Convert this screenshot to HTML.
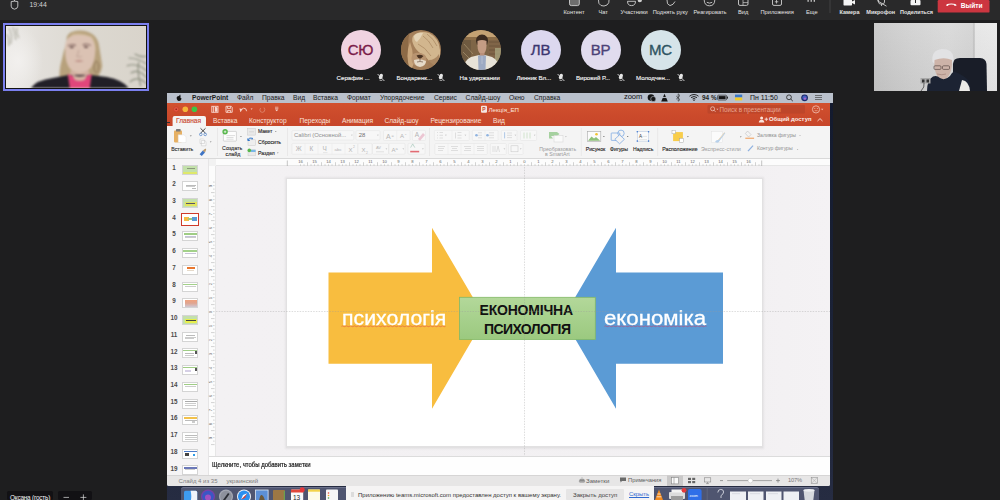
<!DOCTYPE html>
<html><head><meta charset="utf-8">
<style>
*{margin:0;padding:0;box-sizing:border-box}
html,body{width:1000px;height:500px;overflow:hidden;background:#1e1e1f;font-family:"Liberation Sans",sans-serif;position:relative}
.a{position:absolute}
.t{position:absolute;white-space:nowrap;line-height:1}
.tl{position:absolute;white-space:nowrap;line-height:1;color:#e4e4e4;font-size:5.7px;top:10.1px}
.av{position:absolute;top:29.5px;width:40px;height:40px;border-radius:50%;text-align:center;line-height:40px;font-size:15px;letter-spacing:-0.2px;-webkit-text-stroke:0.35px currentColor}
.nm{position:absolute;top:74.5px;color:#f2f2f2;font-size:6.1px;white-space:nowrap;line-height:1;-webkit-text-stroke:0.15px #f0f0f0}
.mic{position:absolute;top:74px;width:6px;height:7px}
.mb{position:absolute;white-space:nowrap;line-height:1;color:#1b1b1b;font-size:6.7px;top:94.7px}
.tab{position:absolute;white-space:nowrap;line-height:1;color:#fbe2da;font-size:6.6px;top:117.6px}
.rl{position:absolute;white-space:nowrap;line-height:1;color:#262626;font-size:5.8px;-webkit-text-stroke:0.12px #262626}
.rlg{position:absolute;white-space:nowrap;line-height:1;color:#9a9a9a;font-size:5.8px}
.btn{position:absolute;border:0.6px solid #dedddd;background:#f1f0f0;border-radius:1.5px}
.thn{position:absolute;left:182px;width:16px;height:10px;background:#fff;border:0.6px solid #d4d4d4}
.num{position:absolute;left:171px;width:8px;text-align:center;font-size:6.3px;font-weight:bold;color:#4a4a4a;line-height:1}
.rn{position:absolute;top:159.6px;font-size:4.2px;color:#666;line-height:1;width:10px;text-align:center}
</style></head><body>
<!-- ============ TEAMS TOP BAR ============ -->
<div class="a" style="left:0;top:0;width:1000px;height:20px;background:#29292a"></div>
<svg class="a" style="left:0;top:0" width="60" height="20" viewBox="0 0 60 20">
  <path d="M11.2 1.6 L11.2 6.2 Q11.2 8.6 14.5 9.2 Q17.8 8.6 17.8 6.2 L17.8 1.6 Q14.5 0.6 11.2 1.6Z" fill="none" stroke="#cfcfcf" stroke-width="0.9"/>
  <line x1="14.5" y1="0" x2="14.5" y2="1.2" stroke="#cfcfcf" stroke-width="0.9"/>
</svg>
<div class="t" style="left:29.5px;top:1.8px;font-size:6.9px;color:#d4d4d4">19:44</div>

<svg class="a" style="left:540px;top:0" width="460" height="20" viewBox="540 0 460 20">
  <g fill="none" stroke="#cfcfcf" stroke-width="0.9">
    <path d="M569.5 0 V3.8 Q569.5 5.6 571.3 5.6 H577.5 Q579.3 5.6 579.3 3.8 V0" fill="#6e6e6e"/>
    <path d="M598.5 0 Q598 4 601 5.5 Q604 6.8 607 5 Q609.5 3 609 0"/>
    <path d="M627.5 1.3 Q627.5 5.6 631.5 5.6 Q635.5 5.6 635.5 1.3 Z"/>
    <path d="M667 0 Q666.5 4.6 670 5.6 Q673.5 5 675 1.5"/>
    <path d="M704.2 0 Q704.4 5.8 709.5 5.8 Q714.6 5.8 714.8 0"/>
    <path d="M706.8 2.3 Q709.5 4 712.2 2.3"/>
    <path d="M738.5 0 V4 Q738.5 5.4 740 5.4 H746.5 Q748 5.4 748 4 V0"/>
    <path d="M772.5 0 V4 Q772.5 5.4 774 5.4 H780 Q781.5 5.4 781.5 4 V0"/>
    <path d="M878.5 -1 V2 Q878.5 4.2 881.5 4.2 Q884.5 4.2 884.5 2 V-1 M877 0.5 L886.5 6.2 M881.5 4.2 V6"/>
  </g>
  <path d="M637.6 0 Q637.6 2.2 639.8 2.2 Q642 2.2 642 0Z" fill="#cfcfcf"/>
  <path d="M743 2.6 H748 M743 0 V5.4" stroke="#cfcfcf" stroke-width="0.7"/>
  <path d="M776.5 0 V3.5 M774.8 1.8 H778.3" stroke="#cfcfcf" stroke-width="0.8"/>
  <g fill="#d0d0d0"><rect x="807.5" y="0" width="1.2" height="1.8"/><rect x="810.6" y="0" width="1.2" height="1.8"/><rect x="813.7" y="0" width="1.2" height="1.8"/></g>
  <rect x="829.6" y="0" width="0.8" height="13" fill="#4a4a4a"/>
  <path d="M843.5 0 H852 V1.6 L855 0 V4.6 L852 3 V4.8 Q852 5.4 851.4 5.4 H844.1 Q843.5 5.4 843.5 4.8Z" fill="#f4f4f4"/>
  <rect x="910.5" y="0" width="10" height="5.2" rx="1" fill="#f4f4f4"/>
  <rect x="915" y="0" width="1" height="3" fill="#29292a"/>
  <rect x="937.7" y="0" width="51.8" height="12.6" rx="1.2" fill="#cc3640"/>
  <path d="M946 5.4 Q946 3.4 951.3 3.4 Q956.6 3.4 956.6 5.4 L954.8 6 L953.8 4.8 Q951.3 4.4 948.8 4.8 L947.8 6Z" fill="#fff"/>
</svg>
<div class="tl" style="left:563.5px">Контент</div>
<div class="tl" style="left:598.5px">Чат</div>
<div class="tl" style="left:620.5px">Участники</div>
<div class="tl" style="left:652.7px">Поднять руку</div>
<div class="tl" style="left:693.5px">Реагировать</div>
<div class="tl" style="left:738px">Вид</div>
<div class="tl" style="left:760.5px">Приложения</div>
<div class="tl" style="left:806px">Еще</div>
<div class="tl" style="left:839.5px;font-size:5.5px;font-weight:bold">Камера</div>
<div class="tl" style="left:866.3px;font-size:5.5px;font-weight:bold">Микрофон</div>
<div class="tl" style="left:900px;font-size:5.5px;font-weight:bold">Поделиться</div>
<div class="t" style="left:960.8px;top:2.8px;font-size:6.6px;font-weight:bold;color:#fff">Выйти</div>

<!-- ============ SELF VIDEO ============ -->
<div class="a" style="left:2.5px;top:23px;width:146.5px;height:68px;background:#7a7fee"></div>
<div class="a" style="left:4.5px;top:25px;width:142.5px;height:64px;background:#121212"></div>
<div class="a" style="left:5.5px;top:26px;width:140.5px;height:62px;overflow:hidden;background:linear-gradient(90deg,#ebe9e6 0%,#e2dfda 25%,#dcd8d0 60%,#d9d4cb 100%)">
  <div class="a" style="left:0;top:0;width:40px;height:62px;background:radial-gradient(ellipse 25px 35px at 12px 35px,#f2f0ee,transparent)"></div>
  <svg class="a" style="left:0;top:0;filter:blur(0.8px)" width="141" height="62" viewBox="5.5 26 140.5 62">
    <path d="M8 28 Q12 34 10 44 M12 27 Q14 32 15 40 M16 28 Q15 33 18 38 M6 34 Q9 38 8 46" stroke="#8e8e7e" stroke-width="1" fill="none" opacity=".8"/>
    <path d="M128 58 Q137 58 146 64 M126 66 Q136 62 146 71 M130 73 Q138 68 146 78 M134 54 Q141 58 146 56 M129 82 Q137 75 146 84 M138 62 Q136 72 140 86" stroke="#7e8272" stroke-width="1.2" fill="none" opacity=".85"/>
    <path d="M66 42 Q64 31 79 30.5 Q95 31 98 44 Q100 56 101.5 66 Q100 74 96 78 L88 76 L70 76 Q62 80 59 79 Q58 70 61 60 Q63 50 66 42Z" fill="#b7a17c"/>
    <path d="M70 34 Q80 31 92 37 Q96 44 95 52 L92 42 Q84 36 72 38Z" fill="#cdb993" opacity=".8"/>
    <path d="M64.5 44 Q66 36 74 35 Q82 34 90 37 Q95 43 94.5 52 Q94 62 90 68 Q85 73 79 73 Q72 73 68 67 Q64 60 64.5 50Z" fill="#dbc2b3"/>
    <path d="M67 46 Q71 43.5 75 45.5 M82 45 Q86 43 90 45.5" stroke="#8a6e68" stroke-width="1.4" fill="none"/>
    <ellipse cx="71" cy="47.3" rx="2.2" ry="1" fill="#6e5450"/><ellipse cx="85.3" cy="47" rx="2.2" ry="1" fill="#6e5450"/>
    <path d="M78 50 Q77 55 76 56.5 Q78.5 57.5 81 56.5" stroke="#b89c90" stroke-width="0.8" fill="none"/>
    <path d="M73.5 61 Q78 59.5 83 61 Q78 62.5 73.5 61Z" fill="#b37f78"/>
    <ellipse cx="95.6" cy="67" rx="2.3" ry="5.8" fill="none" stroke="#8b7256" stroke-width="0.9"/>
    <path d="M70 70 Q79 76 88 70 L89 77 L69 77Z" fill="#d2b1a2"/>
    <path d="M30 88 Q36 80 52 78 L68 75 L90 75 L106 77 Q122 80 128 88Z" fill="#211f27"/>
    <path d="M67 74 Q78 80 91 74 L89 88 L69 88Z" fill="#e0467b"/>
    <path d="M71 74 Q79 79 87 74 L84 80 Q79 82 74 80Z" fill="#d4b2a2"/>
  </svg>
</div>

<!-- ============ AVATARS ============ -->
<div class="av" style="left:340.5px;background:#f0d3e1;color:#7a1c49">СЮ</div>
<div class="av" style="left:400.5px;overflow:hidden;background:#a47f5a">
  <svg class="a" style="left:0;top:0;filter:blur(0.5px)" width="40" height="40" viewBox="0 0 40 40">
    <path d="M0 0 H9 Q5 15 9 40 H0Z" fill="#8d6a46"/>
    <path d="M9 40 Q4 25 9 12 Q12 20 12 28 Q14 36 9 40Z" fill="#c9a67c"/>
    <path d="M12 6 Q18 0 28 3 Q38 8 39 20 Q40 30 34 36 Q28 32 24 26 Q16 22 13 16 Q10 10 12 6Z" fill="#d2b68e"/>
    <path d="M13 6 Q16 2 22 3 Q20 8 16 12 Q13 11 13 6Z" fill="#e4d3b6"/>
    <path d="M22 6 Q28 10 32 18 M26 4 Q33 9 36 16 M17 14 Q24 17 30 26" stroke="#a88660" stroke-width="1" fill="none" opacity=".7"/>
    <path d="M12 24 Q18 21 24 25 Q27 30 24 34 Q18 38 12 34 Q9 29 12 24Z" fill="#b89470"/>
    <path d="M13 30 Q19 28 25 31 Q25 36 19 37 Q13 36 13 30Z" fill="#e6dac8"/>
    <path d="M15.5 25.5 Q19 24 22.5 26 Q20 28.5 19 28.5 Q17 28.5 15.5 25.5Z" fill="#4a3322"/>
    <path d="M19 28.5 V31 M16 32 Q19 31 22 32" stroke="#5a4030" stroke-width="0.6" fill="none"/>
    <path d="M28 30 Q34 30 38 24 L40 40 H26Z" fill="#a07c58" opacity=".8"/>
  </svg>
</div>
<div class="av" style="left:460.5px;overflow:hidden;background:#7e6547">
  <svg class="a" style="left:0;top:0;filter:blur(0.45px)" width="40" height="40" viewBox="0 0 40 40">
    <rect x="0" y="0" width="40" height="7" fill="#c4a273"/>
    <rect x="0" y="7" width="40" height="3" fill="#8b6d48"/>
    <rect x="0" y="10" width="10" height="30" fill="#6f5a40"/>
    <path d="M3 14 L12 24 M2 22 L10 30" stroke="#a89470" stroke-width="1" opacity=".7"/>
    <rect x="27" y="10" width="13" height="30" fill="#806548"/>
    <path d="M28 12 H40 M28 16 H40 M28 20 H40 M28 24 H40" stroke="#5e4a34" stroke-width="0.8" opacity=".7"/>
    <rect x="34" y="18" width="6" height="14" fill="#a8a47e" opacity=".8"/>
    <path d="M15 11 Q15 5 21 4.5 Q27 5 27 11 L26 15 Q21 12 16 15Z" fill="#3a2a1f"/>
    <path d="M16.5 11 Q16 20 18.5 23 Q21 25 23.5 23 Q26 20 25.5 11 Q21 9 16.5 11Z" fill="#c49c84"/>
    <rect x="19" y="23" width="4.5" height="4" fill="#b98f78"/>
    <path d="M2 40 Q3 30 10 27 L18 25 Q21 28 24 25 L31 27 Q38 30 38 40Z" fill="#e8e3d8"/>
    <path d="M17 25.5 L25 25.5 L24.5 40 L17.5 40Z" fill="#9daac3"/>
    <path d="M21 26 V34" stroke="#c8ccd8" stroke-width="0.6"/>
  </svg>
</div>
<div class="av" style="left:520.5px;background:#dcd8ef;color:#3b3670">ЛВ</div>
<div class="av" style="left:580.5px;background:#e1dcee;color:#4b4277">ВР</div>
<div class="av" style="left:640.5px;background:#d6e4e9;color:#2d5462">МС</div>

<div class="nm" style="left:336.6px">Серафин ...</div>
<div class="nm" style="left:396.5px">Бондаренк...</div>
<div class="nm" style="left:459.6px">На удержании</div>
<div class="nm" style="left:516.5px">Линник Вл...</div>
<div class="nm" style="left:576px">Вировий Р...</div>
<div class="nm" style="left:636px">Молодчен...</div>
<svg class="a" style="left:330px;top:70px" width="360" height="14" viewBox="330 70 360 14">
  <defs><g id="mute"><path d="M-3.2 -3.4 L3.6 3.6" stroke="#dcdcdc" stroke-width="0.9"/><path d="M-0.8 -3.2 Q1 -4.4 2.2 -2.4 L1.6 0.6 Q0.4 2.4 -1.6 1.4 Q-2.6 0.2 -1.6 -1.2Z" fill="#e6e6e6"/><path d="M-1.4 2.6 Q0.2 3.6 1.6 2.8" stroke="#dcdcdc" stroke-width="0.7" fill="none"/></g></defs>
  <use href="#mute" x="380.8" y="77.4"/><use href="#mute" x="440.8" y="77.4"/><use href="#mute" x="560.8" y="77.4"/><use href="#mute" x="620.8" y="77.4"/><use href="#mute" x="680.8" y="77.4"/>
</svg>

<!-- ============ RIGHT VIDEO ============ -->
<div class="a" style="left:874px;top:23px;width:123px;height:68px;overflow:hidden;background:linear-gradient(90deg,#c8c8c8 0%,#d2d2d2 30%,#d9d9d9 60%,#d4d4d4 80%,#bdbdbd 81.3%,#e6e6e6 82.5%,#e9e9e9 100%)">
  <div class="a" style="left:0;top:0;width:123px;height:68px;background:linear-gradient(180deg,rgba(255,255,255,.06),rgba(0,0,0,.04))"></div>
  <svg class="a" style="left:0;top:0;filter:blur(0.45px)" width="123" height="68" viewBox="874 23 123 68">
    <path d="M953 91 V64 Q953 58 960 58 H980 Q986 58.5 986.5 64 L987 91Z" fill="#191d28"/>
    <path d="M932.5 62 Q931 50 942 49 Q953 49 953.5 58 Q954 62 952 64 L935 64Z" fill="#e2e2e4"/>
    <path d="M934.5 60 Q933.5 71 938 77 Q942 81 947 78 Q952.5 72 952 60 Q944 56.5 934.5 60Z" fill="#cdb3a8"/>
    <rect x="934" y="65.8" width="7" height="3.6" rx="1" fill="none" stroke="#5a4a46" stroke-width="0.7"/><rect x="942.5" y="65.8" width="7" height="3.6" rx="1" fill="none" stroke="#5a4a46" stroke-width="0.7"/>
    <path d="M937 74 Q942 75.5 946 74" stroke="#9a7a72" stroke-width="0.6" fill="none"/>
    <path d="M927 91 Q927 80 933 76.5 Q937 75 940 78 Q945 81 950 76 Q952 72 954 71.5 Q962 74 968 80 Q971 85 970 91Z" fill="#1c2333"/>
    <path d="M962 80 Q969 81 970 91 H959Z" fill="#ecebe8"/>
    <rect x="920.5" y="78" width="10" height="5.5" fill="#a8a8a8"/><rect x="922" y="79.5" width="2.5" height="3" fill="#333"/><rect x="926.5" y="79.5" width="2.5" height="3" fill="#333"/>
    <path d="M924 83 Q925 87 921 91" stroke="#333" stroke-width="0.7" fill="none"/>
  </svg>
</div>

<!-- ============ POWERPOINT ============ -->
<div class="a" style="left:167px;top:93px;width:666px;height:407px;background:linear-gradient(#131a2e,#1c2338 60%,#262c42)"></div>
<div class="a" style="left:167px;top:93px;width:663px;height:393px;background:#f3f2f2;border-radius:0 0 2px 2px"></div>
<!-- menubar -->
<div class="a" style="left:167px;top:93px;width:666px;height:9.5px;background:#bac1cc"></div>
<svg class="a" style="left:175px;top:94px" width="8" height="8" viewBox="0 0 8 8"><path d="M4 2.2 Q5 1 6 1.8 Q5.2 2.6 5.4 3.6 Q6.2 4.4 6.6 4.6 Q6 6.8 4.8 7 Q4.2 6.7 3.6 6.9 Q2.8 7.1 2 5.6 Q1 3.5 2.3 2.5 Q3.2 1.9 4 2.2Z M4.1 1.9 Q4.3 0.6 5.4 0.5 Q5.3 1.6 4.1 1.9Z" fill="#111"/></svg>
<div class="mb" style="left:192px;font-weight:bold;font-size:6.6px">PowerPoint</div>
<div class="mb" style="left:237px">Файл</div>
<div class="mb" style="left:262px">Правка</div>
<div class="mb" style="left:293px">Вид</div>
<div class="mb" style="left:313px">Вставка</div>
<div class="mb" style="left:347px">Формат</div>
<div class="mb" style="left:380px">Упорядочение</div>
<div class="mb" style="left:434px">Сервис</div>
<div class="mb" style="left:465.6px">Слайд-шоу</div>
<div class="mb" style="left:509px">Окно</div>
<div class="mb" style="left:534px">Справка</div>
<div class="mb" style="left:624px;font-size:7.6px;top:93.4px;letter-spacing:-0.1px;color:#111">zoom</div>
<svg class="a" style="left:640px;top:93px" width="193" height="10" viewBox="640 93 193 10">
  <circle cx="651" cy="97.6" r="3.3" fill="#151515"/><circle cx="653.3" cy="99" r="2.6" fill="#151515" stroke="#bac1cc" stroke-width="0.6"/>
  <path d="M664.5 93.8 L667.8 101.5 H661.2Z" fill="#151515"/><rect x="662" y="97" width="5" height="0.9" fill="#bac1cc"/>
  <path d="M676.2 96 L680 99.6 L678.2 101.2 V93.8 L680 95.6 L676.2 99.2" fill="none" stroke="#222" stroke-width="0.6"/>
  <path d="M689.5 96.2 Q694 92.8 698.5 96.2 M691 97.6 Q694 95.4 697 97.6 M692.6 99 Q694 98 695.4 99" fill="none" stroke="#151515" stroke-width="0.9"/><circle cx="694" cy="100.3" r="0.7" fill="#151515"/>
  <rect x="717.6" y="95.2" width="9" height="4.8" rx="0.9" fill="none" stroke="#151515" stroke-width="0.6"/><rect x="718.6" y="96.1" width="7" height="3" fill="#151515"/><rect x="727" y="96.6" width="0.9" height="2" fill="#151515"/>
  <rect x="735" y="94.6" width="7.2" height="2.9" fill="#3a78c9"/><rect x="735" y="97.5" width="7.2" height="2.9" fill="#f2cb2b"/>
  <circle cx="789" cy="97.3" r="2.4" fill="none" stroke="#222" stroke-width="0.8"/><path d="M790.7 99 L792.8 101.1" stroke="#222" stroke-width="0.9"/>
  <circle cx="804.6" cy="97.8" r="3.4" fill="#1d2a6a"/><circle cx="804.6" cy="97.8" r="2.3" fill="#4f6fd8" opacity=".8"/><circle cx="805" cy="98.6" r="1.2" fill="#d66ad0" opacity=".7"/>
  <g stroke="#333" stroke-width="0.6"><path d="M815 95.5 H822 M815 97.5 H822 M815 99.5 H822"/></g>
</svg>
<div class="mb" style="left:702px;font-size:6.4px;font-weight:bold;color:#222">94 %</div>
<div class="mb" style="left:750px;font-size:6.9px;color:#111;letter-spacing:0.05px">Пн 11:50</div>
<!-- orange title + tabs -->
<div class="a" style="left:167px;top:102.5px;width:663px;height:23.5px;background:linear-gradient(#d2512f,#cb4a2b 55%,#c7462a)"></div>
<svg class="a" style="left:167px;top:102px" width="663" height="24" viewBox="167 102 663 24">
  <circle cx="176.2" cy="109.3" r="2.6" fill="#e2563f" stroke="#c03b28" stroke-width="0.5"/><circle cx="176.2" cy="109.3" r="0.8" fill="#8a1c10"/>
  <circle cx="185.3" cy="109.3" r="2.8" fill="#f5b43a"/>
  <circle cx="194.4" cy="109.3" r="2.8" fill="#3cc646"/>
  <g fill="none" stroke="#f8d8cf" stroke-width="0.9">
    <rect x="211.8" y="106.3" width="6.2" height="6"/><path d="M213.4 106.3 V112.3"/>
    <path d="M214.8 106.9 H216.4 L217.4 108 V111.7 H214.8Z" fill="#f8d8cf" stroke="none"/>
    <path d="M226 106.3 H231.2 L232.2 107.3 V112.3 H226Z"/><path d="M227.4 106.3 V108.4 H230.6 V106.3 M227.6 112.3 V110.4 H230.6 V112.3"/>
    <path d="M240.5 111.8 Q241 108.6 243.6 108.2 Q246.4 108 246.6 111.2"/>
  </g>
  <path d="M239.4 108.4 L242.6 109 L240.4 111.6Z" fill="#f8d8cf"/>
  <path d="M250.6 108.6 H252.6 L251.6 109.8Z" fill="#f8d8cf"/>
  <path d="M260.6 108 Q259 110 260.6 111.8 Q262.4 113 264.2 111.6 Q265.6 109.6 264 107.6" fill="none" stroke="#e08a74" stroke-width="0.8"/>
  <path d="M275 107.2 H278.4 M275 108.4 H278.4" stroke="#f8d8cf" stroke-width="0.6"/><path d="M275 109.4 H278.4 L276.7 111.2Z" fill="#f8d8cf"/>
  <path d="M172.6 126 V118 Q172.6 116 174.6 116 H204 Q206 116 206 118 V126Z" fill="#f4f4f4"/>
  <rect x="481" y="105.8" width="6" height="7" rx="1" fill="#f5e6e0"/><text x="482.2" y="111.4" font-size="5" font-weight="bold" fill="#c7462a" font-family="Liberation Sans">P</text>
  <rect x="707.5" y="105" width="97.5" height="8.6" rx="1" fill="#b8442a" opacity=".75"/>
  <circle cx="712.6" cy="108.8" r="2" fill="none" stroke="#f1c3b6" stroke-width="0.8"/><path d="M714 110.2 L715.5 111.8" stroke="#f1c3b6" stroke-width="0.8"/><path d="M716.3 108.8 H718.5 L717.4 110Z" fill="#f1c3b6"/>
  <circle cx="816" cy="109.4" r="3.6" fill="none" stroke="#f2c4b6" stroke-width="0.8"/><circle cx="814.8" cy="108.6" r="0.5" fill="#f2c4b6"/><circle cx="817.3" cy="108.6" r="0.5" fill="#f2c4b6"/><path d="M814.6 110.7 H817.5" stroke="#f2c4b6" stroke-width="0.6"/>
  <path d="M821 108.8 H823.4 L822.2 110.2Z" fill="#f2c4b6"/>
  <circle cx="761.6" cy="118" r="1.5" fill="#fbe3db"/><path d="M758.8 122.6 Q759 119.8 761.6 119.8 Q764.2 119.8 764.4 122.6Z" fill="#fbe3db"/><path d="M764.6 119.2 H768 M766.3 117.5 V120.9" stroke="#fbe3db" stroke-width="0.9"/>
  <path d="M817.5 121 L820 118.6 L822.5 121" fill="none" stroke="#fbe3db" stroke-width="0.9"/>
</svg>
<div class="t" style="left:488.5px;top:106.6px;font-size:6.2px;color:#fbe6df">Лекція_ЕП</div>
<div class="t" style="left:719.5px;top:106.9px;font-size:6.3px;color:#eaa48f">Поиск в презентации</div>
<div class="t" style="left:769px;top:117.4px;font-size:5.9px;font-weight:bold;color:#fdeee9">Общий доступ</div>
<div class="tab" style="left:176px;color:#c9462b;-webkit-text-stroke:0.12px #c9462b">Главная</div>
<div class="tab" style="left:213px">Вставка</div>
<div class="tab" style="left:249px">Конструктор</div>
<div class="tab" style="left:299.4px">Переходы</div>
<div class="tab" style="left:342px">Анимация</div>
<div class="tab" style="left:384.4px">Слайд-шоу</div>
<div class="tab" style="left:430.4px">Рецензирование</div>
<div class="tab" style="left:493px">Вид</div>
<div class="a" style="left:167px;top:121.5px;width:3px;height:1px;background:#333"></div>
<!-- ribbon -->
<div class="a" style="left:167px;top:126px;width:663px;height:32.8px;background:#f4f4f4;border-bottom:0.8px solid #d9d9d9"></div>

<!-- ribbon contents -->
<svg class="a" style="left:167px;top:126px" width="663" height="32" viewBox="167 126 663 32">
  <g stroke="#dedddd" stroke-width="0.5"><path d="M217.5 128 V156 M287.5 128 V156 M429.5 128 V156 M581.3 128 V156 M657.7 128 V156"/></g>
  <!-- paste -->
  <rect x="174" y="130.6" width="8" height="11.8" rx="0.8" fill="#e6b063"/>
  <rect x="176" y="129" width="4.6" height="2.6" rx="0.6" fill="#7b7b7b"/>
  <path d="M178.2 134.8 H184 L186 136.8 V142.5 H178.2Z" fill="#fff" stroke="#d8d8d8" stroke-width="0.4"/>
  <path d="M189.8 135.5 H191.8 L190.8 136.6Z" fill="#666"/>
  <!-- scissors -->
  <path d="M200.5 128.3 L205.5 133.2 M205.5 128.3 L200.5 133.2" stroke="#222" stroke-width="0.8"/>
  <circle cx="200.8" cy="134.4" r="1.3" fill="none" stroke="#4b7fc8" stroke-width="0.7"/><circle cx="205.2" cy="134.4" r="1.3" fill="none" stroke="#4b7fc8" stroke-width="0.7"/>
  <!-- copy -->
  <path d="M200 139 H203.3 L204.5 140.2 V143.5 H200Z M201.4 140.5 H204.8 L206 141.7 V145.8 H201.4Z" fill="#fafafa" stroke="#c4c4c4" stroke-width="0.5"/>
  <path d="M209.8 141.6 H211.6 L210.7 142.6Z" fill="#777"/>
  <!-- painter -->
  <path d="M199.6 154.2 L202.8 150.6 L205 152.6 L201.8 156Z" fill="#3d73c4"/><path d="M202.8 150.6 L205.6 148.6 L206.2 149.4 L205 152.6Z" fill="#b99a6e"/>
  <!-- new slide -->
  <rect x="223.4" y="131.4" width="13" height="9.7" rx="0.6" fill="#fdfdfd" stroke="#bdbdbd" stroke-width="0.6"/>
  <path d="M226.5 135.6 H235 M226.5 137.5 H233.5 M226.5 139.2 H233.5" stroke="#bcbcbc" stroke-width="0.5"/>
  <circle cx="225.1" cy="131.8" r="2.7" fill="#56b64a"/><path d="M223.8 131.8 H226.4 M225.1 130.5 V133.1" stroke="#fff" stroke-width="0.7"/>
  <path d="M240.1 136 H241.8 L240.95 137Z" fill="#666"/>
  <!-- maket, reset, section -->
  <rect x="247.6" y="128.6" width="8" height="6.5" fill="#e9e9e9" stroke="#c9c9c9" stroke-width="0.5"/><path d="M249 131.8 H254" stroke="#bbb" stroke-width="0.4"/>
  <rect x="248" y="139.8" width="7.6" height="5.6" fill="#eee" stroke="#cacaca" stroke-width="0.5"/>
  <path d="M247.6 140 Q249.5 137 252.6 138.3 L252 139.6 M247.8 138.4 L248 140.6 L250 140.2" fill="none" stroke="#2e74c9" stroke-width="1"/>
  <rect x="248" y="149.8" width="7.6" height="6" fill="#e9e9e9" stroke="#cacaca" stroke-width="0.5"/><rect x="250.6" y="149.8" width="5" height="2.2" fill="#77b7e6"/>
  <circle cx="249.3" cy="150.4" r="1.8" fill="#56b64a"/>
  <path d="M275 131 H276.6 L275.8 132Z M277 152.5 H278.6 L277.8 153.5Z" fill="#777"/>
  <!-- font buttons -->
  <g fill="#f7f7f7" stroke="#e3e2e2" stroke-width="0.5">
    <rect x="291.9" y="130.6" width="61.9" height="9.4" rx="1"/>
    <rect x="356" y="130.6" width="24" height="9.4" rx="1"/>
    <rect x="383.5" y="130.3" width="26.6" height="10.2" rx="1"/>
    <rect x="412.4" y="130.3" width="13.1" height="10.2" rx="1"/>
    <rect x="291.9" y="143.4" width="66" height="10.9" rx="1"/>
    <rect x="358" y="143.4" width="14" height="10.9" rx="1"/>
    <rect x="372.5" y="143.4" width="16" height="10.9" rx="1"/>
    <rect x="389" y="143.4" width="16" height="10.9" rx="1"/>
    <rect x="408" y="143.4" width="17" height="10.9" rx="1"/>
    <rect x="434.4" y="130.3" width="34.9" height="10.2" rx="1"/>
    <rect x="472.3" y="130.3" width="25.8" height="10.2" rx="1"/>
    <rect x="501.4" y="130.3" width="15.7" height="10.2" rx="1"/>
    <rect x="520.5" y="130.3" width="16.1" height="10.2" rx="1"/>
    <rect x="434.8" y="143.5" width="52.5" height="11" rx="1"/>
    <rect x="490.3" y="143.5" width="16" height="11" rx="1"/>
    <rect x="508.5" y="143.5" width="14.6" height="11" rx="1"/>
  </g>
  <g stroke="#e6e5e5" stroke-width="0.4"><path d="M305 143.6 V154.2 M318 143.6 V154.2 M332 143.6 V154.2 M345 143.6 V154.2 M396.8 130.4 V140.4 M452 130.4 V140.4 M485 130.4 V140.4 M448 143.6 V154.4 M461 143.6 V154.4 M474 143.6 V154.4"/></g>
  <g fill="#b3b3b3"><path d="M351 134.8 H352.8 L351.9 135.8Z M377 134.8 H378.8 L377.9 135.8Z M445 134.8 H446.8 L445.9 135.8Z M464.5 134.8 H466.3 L465.4 135.8Z M514.5 134.8 H516.3 L515.4 135.8Z M533.8 134.8 H535.6 L534.7 135.8Z M385.5 148.4 H387.3 L386.4 149.4Z M402.4 148.4 H404.2 L403.3 149.4Z M422 148.4 H423.8 L422.9 149.4Z M503.5 148.4 H505.3 L504.4 149.4Z M519.8 148.4 H521.6 L520.7 149.4Z M565 136.2 H566.8 L565.9 137.2Z"/></g>
  <g fill="none" stroke="#c4c4c4" stroke-width="0.5">
    <path d="M437 132.5 H438 M437 135.3 H438 M437 138 H438 M439.5 132.5 H443 M439.5 135.3 H443 M439.5 138 H443"/>
    <path d="M455.5 132.5 V138.5 M457.5 132.5 H461.5 M457.5 135.3 H461.5 M457.5 138 H461.5"/>
    <path d="M478 132.8 H482 M478 135.3 H482 M478 137.8 H482 M489 132.8 H494 M489 135.3 H494 M489 137.8 H494"/>
    <path d="M507 133 H512 M507 135.3 H512 M507 137.6 H512"/>
    <path d="M524 132.5 V138.5 M527 132.5 V138.5 M530 132.5 V138.5" stroke="#a9cfa0"/>
    <path d="M438 146.5 H445 M438 148.5 H444 M438 150.5 H443 M451 146.5 H458 M452 148.5 H457 M451 150.5 H458 M464 146.5 H471 M465 148.5 H471 M464 150.5 H471 M477 146.5 H484 M477 148.5 H484 M477 150.5 H484"/>
    <path d="M493 146 V152 M495 146 V152 M498 146 L496.6 152 M498 146 L499.5 152"/>
    <rect x="511" y="145.8" width="7" height="6"/>
  </g>
  <circle cx="476.5" cy="135.3" r="1.3" fill="#8fb3e0"/><circle cx="487.5" cy="135.3" r="1.3" fill="#8fb3e0"/>
  <path d="M504.6 132.2 V138.4" stroke="#8fb3e0" stroke-width="0.7"/>
  <!-- text format glyphs -->
  <g font-family="Liberation Sans" fill="#b4b4b4">
    <text x="295.8" y="151.3" font-size="6.4">Ж</text>
    <text x="309.5" y="151.3" font-size="6.4">К</text>
    <text x="322.5" y="151.3" font-size="6.4">Ч</text>
    <text x="334.5" y="150.8" font-size="4.4">abc</text>
    <text x="348.5" y="151.6" font-size="6">X</text><text x="353" y="148" font-size="3.3">2</text>
    <text x="361.5" y="151.6" font-size="6">X</text><text x="366" y="153.5" font-size="3.3">2</text>
    <text x="376" y="148.8" font-size="4">AV</text>
    <text x="391.5" y="151.6" font-size="6">A</text><text x="395.5" y="150" font-size="4">a</text>
    <text x="386" y="138.6" font-size="7">A</text><text x="391.6" y="136.6" font-size="4">=</text>
    <text x="400" y="138" font-size="6">A</text><text x="404.6" y="136.8" font-size="4">⁼</text>
    <text x="414.8" y="137.2" font-size="6.5">A</text>
  </g>
  <path d="M376 151.8 H384" stroke="#c9c9c9" stroke-width="0.5"/>
  <path d="M323 152.6 H327.5" stroke="#c9c9c9" stroke-width="0.4"/>
  <path d="M418 139 L423 133 L425 135 L420 140.8Z" fill="#e8b9c9" opacity=".8"/>
  <path d="M410.6 147.6 L412.7 143.9 L414.8 147.6" fill="none" stroke="#a8c8bc" stroke-width="0.7"/>
  <rect x="410.2" y="150.8" width="9" height="1.6" fill="#e26b73"/>
  <!-- SmartArt -->
  <path d="M549 132 H557 L559.5 134 L557 136 H551 L553 138.5 H549Z" fill="#a6d1a0"/>
  <rect x="554" y="135.5" width="9" height="6.5" fill="#fafafa" stroke="#d2d2d2" stroke-width="0.5"/>
  <!-- picture -->
  <rect x="587.3" y="131.4" width="13.5" height="10.2" fill="#fbfbfb" stroke="#a9a9a9" stroke-width="0.6"/>
  <path d="M588 140.8 L591.5 136.6 L594 138.5 L596 137 L600.2 140.8Z" fill="#8dc07a"/>
  <circle cx="596.5" cy="134.2" r="1.3" fill="#f1c232"/>
  <path d="M603 136 H604.8 L603.9 137Z M626.8 136 H628.6 L627.7 137Z M687 136.2 H688.8 L687.9 137.2Z M740 136.5 H741.6 L740.8 137.5Z" fill="#555"/><path d="M799.2 135 H800.8 L800 136Z M796.8 149 H798.4 L797.6 150Z" fill="#aaa"/>
  <!-- shapes -->
  <g fill="none" stroke="#5a94de" stroke-width="0.6">
    <rect x="611.2" y="133" width="8.6" height="7.4" rx="0.5"/>
    <circle cx="621" cy="133.3" r="3.2"/>
    <path d="M619.6 134.8 L624.4 139.3 L619.6 143.8 L614.8 139.3Z" fill="#f5f4f3"/>
  </g>
  <!-- textbox -->
  <rect x="637.3" y="131.8" width="11.3" height="9.3" fill="#fbfbfb" stroke="#9fb5d6" stroke-width="0.4"/>
  <text x="639" y="137.5" font-size="4.6" font-family="Liberation Sans" fill="#333">A</text>
  <path d="M639 139.6 H647 M642 136.4 H647" stroke="#c4c4c4" stroke-width="0.4"/>
  <g fill="#3f78d1"><circle cx="637.3" cy="131.8" r="0.8"/><circle cx="648.6" cy="131.8" r="0.8"/><circle cx="637.3" cy="141.1" r="0.8"/><circle cx="648.6" cy="141.1" r="0.8"/></g>
  <!-- arrange -->
  <rect x="673.1" y="132.1" width="9.8" height="9" fill="#f8cd4a"/>
  <rect x="672" y="130.2" width="3.4" height="3.6" fill="#fff" stroke="#999" stroke-width="0.4"/>
  <rect x="679.6" y="138.4" width="3.8" height="3.8" fill="#fff" stroke="#999" stroke-width="0.4"/>
  <!-- express styles -->
  <rect x="711.5" y="131.5" width="11" height="11" fill="#fbfbfb" stroke="#e1e1e1" stroke-width="0.5"/>
  <path d="M715 142 Q716 139.5 718.4 140 L724.5 132.5 L725.3 133.2 L719.5 141 Q718.5 143.8 715 142Z" fill="#b7d0ea"/>
  <path d="M718.4 140 L724.5 132.5" stroke="#ead9bd" stroke-width="1"/>
  <!-- fill / outline -->
  <path d="M747.6 131 L751 134.6 L748.6 137 L745.4 133.6Z" fill="none" stroke="#b5b5b5" stroke-width="0.5"/>
  <rect x="745.3" y="137.6" width="8.8" height="1.4" fill="#f1b27e"/>
  <path d="M747.5 150.8 L752.6 145.2 L753.5 146 L748.5 151.6Z" fill="#8fb1e0"/>
</svg>
<div class="rl" style="left:171.3px;top:146.5px;font-size:5.2px;color:#333">Вставить</div>
<div class="rl" style="left:222.1px;top:146.4px;font-size:5.3px;color:#333">Создать</div>
<div class="rl" style="left:225.5px;top:151.8px;font-size:5.3px;color:#333">слайд</div>
<div class="rl" style="left:257.9px;top:129.2px;font-size:5.1px">Макет</div>
<div class="rl" style="left:258px;top:140px;font-size:5.2px">Сбросить</div>
<div class="rl" style="left:258px;top:150.5px;font-size:5.1px">Раздел</div>
<div class="rlg" style="left:294px;top:133.1px;font-size:5.9px;color:#8f8f8f">Calibri (Основной...</div>
<div class="rlg" style="left:358.8px;top:133.1px;font-size:5.9px;color:#6f6f6f">28</div>
<div class="rlg" style="left:539.3px;top:146.8px;font-size:5.2px">Преобразовать</div>
<div class="rlg" style="left:545px;top:152.4px;font-size:5.2px">в SmartArt</div>
<div class="rl" style="left:585.75px;top:147.1px;font-size:5.2px">Рисунок</div>
<div class="rl" style="left:610.1px;top:147.1px;font-size:5.2px">Фигуры</div>
<div class="rl" style="left:633px;top:147.1px;font-size:5.1px">Надпись</div>
<div class="rl" style="left:662.25px;top:147.1px;font-size:5.2px">Расположение</div>
<div class="rlg" style="left:701.1px;top:147.1px;font-size:5.44px">Экспресс-стили</div>
<div class="rlg" style="left:757px;top:132.7px;font-size:5.1px;color:#8e8e8e">Заливка фигуры</div>
<div class="rlg" style="left:757px;top:146.4px;font-size:5.1px;color:#8e8e8e">Контур фигуры</div>

<!-- left slide panel -->
<div class="a" style="left:167px;top:158.8px;width:41.5px;height:316.5px;background:#f5f4f5;border-right:0.6px solid #e6e5e6"></div>
<!-- ruler corner / rulers -->
<div class="a" style="left:208.5px;top:158.8px;width:621.5px;height:7.6px;background:#fcfcfc;border-bottom:0.6px solid #e6e6e6"></div>
<div class="a" style="left:208.5px;top:158.8px;width:7.5px;height:7.6px;background:#f2f2f2"></div>
<div class="a" style="left:208.5px;top:166.4px;width:7.5px;height:289.6px;background:#fcfcfc;border-right:0.6px solid #e6e6e6"></div>
<!-- main canvas -->
<div class="a" style="left:216px;top:166.4px;width:614px;height:290.1px;background:linear-gradient(90deg,#f3f1f3,#f2f0f2 85%,#f4f2f4)"></div>
<!-- panel -->
<div class="thn" style="top:164.50px;overflow:hidden"><div class="a" style="left:0;top:0;width:100%;height:100%;background:#c3e0ab"></div><div class="a" style="left:0;top:6.5px;width:100%;height:2.2px;background:#dfe86a"></div><div class="a" style="left:4px;top:2px;width:8px;height:0.7px;background:#8a9a7a"></div></div>
<div class="num" style="left:170px;top:164.60px;width:8px">1</div>
<div class="thn" style="top:181.22px;overflow:hidden"><div class="a" style="left:3px;top:2.5px;width:10px;height:0.6px;background:#bbb"></div><div class="a" style="left:3px;top:4px;width:9px;height:0.6px;background:#ccc"></div><div class="a" style="left:9px;top:6px;width:4px;height:0.6px;background:#bbb"></div></div>
<div class="num" style="left:170px;top:181.32px;width:8px">2</div>
<div class="thn" style="top:197.94px;overflow:hidden"><div class="a" style="left:0;top:0;width:100%;height:100%;background:#c3e0ab"></div><div class="a" style="left:1.5px;top:3px;width:12.5px;height:3.6px;background:#e3e45c"></div><div class="a" style="left:3px;top:4.4px;width:9px;height:0.9px;background:#556"></div></div>
<div class="num" style="left:170px;top:198.04px;width:8px">3</div>
<div class="a" style="left:181px;top:213.46px;width:18px;height:12.3px;border:1.4px solid #cf3a2a;background:#fff;overflow:hidden"><div class="a" style="left:1.8px;top:2.6px;width:5px;height:4px;background:#f5bb43"></div><div class="a" style="left:6.3px;top:3.4px;width:3.6px;height:2.4px;background:#9dca80"></div><div class="a" style="left:9.6px;top:2.6px;width:5px;height:4px;background:#5b9bd5"></div></div>
<div class="num" style="left:170px;top:214.76px;width:8px">4</div>
<div class="thn" style="top:231.38px;overflow:hidden"><div class="a" style="left:1px;top:1px;width:13px;height:1.3px;background:#9fcd85"></div><div class="a" style="left:2px;top:3.5px;width:11px;height:0.6px;background:#c3c3d8"></div><div class="a" style="left:2px;top:5px;width:11px;height:0.6px;background:#ccc"></div></div>
<div class="num" style="left:170px;top:231.48px;width:8px">5</div>
<div class="thn" style="top:248.10px;overflow:hidden"><div class="a" style="left:0;top:1px;width:100%;height:1.5px;background:#a3d18a"></div><div class="a" style="left:2px;top:3.6px;width:11px;height:0.6px;background:#c8c4d8"></div></div>
<div class="num" style="left:170px;top:248.20px;width:8px">6</div>
<div class="thn" style="top:264.82px;overflow:hidden"><div class="a" style="left:3.5px;top:1.5px;width:8px;height:1.6px;background:#e9772f"></div><div class="a" style="left:4px;top:4px;width:7px;height:0.5px;background:#e5d9c9"></div></div>
<div class="num" style="left:170px;top:264.92px;width:8px">7</div>
<div class="thn" style="top:281.54px;overflow:hidden"><div class="a" style="left:0;top:1px;width:100%;height:1.4px;background:#a3d18a"></div><div class="a" style="left:2px;top:3.6px;width:11px;height:0.6px;background:#ccc"></div></div>
<div class="num" style="left:170px;top:281.64px;width:8px">8</div>
<div class="thn" style="top:298.26px;overflow:hidden"><div class="a" style="left:1.5px;top:1.2px;width:12.5px;height:7px;background:linear-gradient(#f0a27e,#e0a590 45%,#cfc8d4)"></div></div>
<div class="num" style="left:170px;top:298.36px;width:8px">9</div>
<div class="thn" style="top:314.98px;overflow:hidden"><div class="a" style="left:0;top:0;width:100%;height:100%;background:#c3e0ab"></div><div class="a" style="left:1.5px;top:2.8px;width:12.5px;height:3.8px;border-radius:1px;background:#e8ee4c"></div><div class="a" style="left:3px;top:4.3px;width:9.5px;height:0.9px;background:#444"></div></div>
<div class="num" style="left:169.5px;top:315.08px;width:9px">10</div>
<div class="thn" style="top:331.70px;overflow:hidden"><div class="a" style="left:3px;top:2.5px;width:9px;height:0.5px;background:#bbb"></div><div class="a" style="left:2px;top:4.2px;width:11px;height:0.5px;background:#ccc"></div><div class="a" style="left:2px;top:5.6px;width:9px;height:0.5px;background:#ccc"></div></div>
<div class="num" style="left:169.5px;top:331.80px;width:9px">11</div>
<div class="thn" style="top:348.42px;overflow:hidden"><div class="a" style="left:0;top:0.8px;width:100%;height:1.2px;background:#9fcd85"></div><div class="a" style="left:11.5px;top:2px;width:3px;height:3px;background:#555"></div><div class="a" style="left:1.5px;top:3.5px;width:9px;height:0.6px;background:#bbb"></div><div class="a" style="left:1.5px;top:5.5px;width:9px;height:0.6px;background:#ccc"></div></div>
<div class="num" style="left:169.5px;top:348.52px;width:9px">12</div>
<div class="thn" style="top:365.14px;overflow:hidden"><div class="a" style="left:0;top:0.8px;width:100%;height:1.2px;background:#9fcd85"></div><div class="a" style="left:11.5px;top:2px;width:3px;height:3px;background:#555"></div><div class="a" style="left:1.5px;top:3.5px;width:6px;height:2px;background:#d6d0e6"></div></div>
<div class="num" style="left:169.5px;top:365.24px;width:9px">13</div>
<div class="thn" style="top:381.86px;overflow:hidden"><div class="a" style="left:1px;top:0.8px;width:13px;height:1.3px;background:#9fcd85"></div><div class="a" style="left:1.5px;top:3.5px;width:11px;height:0.6px;background:#ccc"></div></div>
<div class="num" style="left:169.5px;top:381.96px;width:9px">14</div>
<div class="thn" style="top:398.58px;overflow:hidden"><div class="a" style="left:1.5px;top:1.5px;width:12px;height:0.6px;background:#aaa"></div><div class="a" style="left:1.5px;top:3.5px;width:11px;height:0.6px;background:#ccc"></div><div class="a" style="left:1.5px;top:5.5px;width:11px;height:0.6px;background:#ccc"></div></div>
<div class="num" style="left:169.5px;top:398.68px;width:9px">15</div>
<div class="thn" style="top:415.30px;overflow:hidden"><div class="a" style="left:1px;top:1px;width:13px;height:1.4px;background:#f2c14b"></div><div class="a" style="left:1.5px;top:3.5px;width:12px;height:0.6px;background:#bbb"></div><div class="a" style="left:9px;top:5px;width:3px;height:2px;background:#ccc"></div></div>
<div class="num" style="left:169.5px;top:415.40px;width:9px">16</div>
<div class="thn" style="top:432.02px;overflow:hidden"><div class="a" style="left:1.5px;top:2px;width:12px;height:0.6px;background:#bbb"></div><div class="a" style="left:1.5px;top:4px;width:12px;height:0.6px;background:#ccc"></div><div class="a" style="left:1.5px;top:6px;width:12px;height:0.6px;background:#ccc"></div></div>
<div class="num" style="left:169.5px;top:432.12px;width:9px">17</div>
<div class="thn" style="top:448.74px;overflow:hidden"><div class="a" style="left:1px;top:1px;width:13px;height:1.2px;background:#4c7bc9"></div><div class="a" style="left:2px;top:3px;width:4px;height:3px;background:#444"></div><div class="a" style="left:10px;top:4.5px;width:1.5px;height:1.5px;background:#2f9be6"></div></div>
<div class="num" style="left:169.5px;top:448.84px;width:9px">18</div>
<div class="thn" style="top:465.46px;overflow:hidden"><div class="a" style="left:1px;top:1px;width:13px;height:1.2px;background:#6b78b8"></div><div class="a" style="left:2px;top:3px;width:10px;height:0.6px;background:#ccc"></div></div>
<div class="num" style="left:169.5px;top:465.56px;width:9px">19</div>
<div class="rn" style="left:295.5px">16</div>
<div class="rn" style="left:309.5px">15</div>
<div class="rn" style="left:323.5px">14</div>
<div class="rn" style="left:337.5px">13</div>
<div class="rn" style="left:351.5px">12</div>
<div class="rn" style="left:365.5px">11</div>
<div class="rn" style="left:379.5px">10</div>
<div class="rn" style="left:393.5px">9</div>
<div class="rn" style="left:407.5px">8</div>
<div class="rn" style="left:421.5px">7</div>
<div class="rn" style="left:435.5px">6</div>
<div class="rn" style="left:449.5px">5</div>
<div class="rn" style="left:463.5px">4</div>
<div class="rn" style="left:477.5px">3</div>
<div class="rn" style="left:491.5px">2</div>
<div class="rn" style="left:505.5px">1</div>
<div class="rn" style="left:519.5px">0</div>
<div class="rn" style="left:533.5px">1</div>
<div class="rn" style="left:547.5px">2</div>
<div class="rn" style="left:561.5px">3</div>
<div class="rn" style="left:575.5px">4</div>
<div class="rn" style="left:589.5px">5</div>
<div class="rn" style="left:603.5px">6</div>
<div class="rn" style="left:617.5px">7</div>
<div class="rn" style="left:631.5px">8</div>
<div class="rn" style="left:645.5px">9</div>
<div class="rn" style="left:659.5px">10</div>
<div class="rn" style="left:673.5px">11</div>
<div class="rn" style="left:687.5px">12</div>
<div class="rn" style="left:701.5px">13</div>
<div class="rn" style="left:715.5px">14</div>
<div class="rn" style="left:729.5px">15</div>
<div class="rn" style="left:743.5px">16</div>
<div class="a" style="left:207.3px;top:180.6px;width:7px;height:10px;font-size:4.3px;color:#666;line-height:10px;text-align:center;transform:rotate(-90deg)">9</div>
<div class="a" style="left:207.3px;top:194.6px;width:7px;height:10px;font-size:4.3px;color:#666;line-height:10px;text-align:center;transform:rotate(-90deg)">8</div>
<div class="a" style="left:207.3px;top:208.6px;width:7px;height:10px;font-size:4.3px;color:#666;line-height:10px;text-align:center;transform:rotate(-90deg)">7</div>
<div class="a" style="left:207.3px;top:222.6px;width:7px;height:10px;font-size:4.3px;color:#666;line-height:10px;text-align:center;transform:rotate(-90deg)">6</div>
<div class="a" style="left:207.3px;top:236.6px;width:7px;height:10px;font-size:4.3px;color:#666;line-height:10px;text-align:center;transform:rotate(-90deg)">5</div>
<div class="a" style="left:207.3px;top:250.6px;width:7px;height:10px;font-size:4.3px;color:#666;line-height:10px;text-align:center;transform:rotate(-90deg)">4</div>
<div class="a" style="left:207.3px;top:264.6px;width:7px;height:10px;font-size:4.3px;color:#666;line-height:10px;text-align:center;transform:rotate(-90deg)">3</div>
<div class="a" style="left:207.3px;top:278.6px;width:7px;height:10px;font-size:4.3px;color:#666;line-height:10px;text-align:center;transform:rotate(-90deg)">2</div>
<div class="a" style="left:207.3px;top:292.6px;width:7px;height:10px;font-size:4.3px;color:#666;line-height:10px;text-align:center;transform:rotate(-90deg)">1</div>
<div class="a" style="left:207.3px;top:306.6px;width:7px;height:10px;font-size:4.3px;color:#666;line-height:10px;text-align:center;transform:rotate(-90deg)">0</div>
<div class="a" style="left:207.3px;top:320.6px;width:7px;height:10px;font-size:4.3px;color:#666;line-height:10px;text-align:center;transform:rotate(-90deg)">1</div>
<div class="a" style="left:207.3px;top:334.6px;width:7px;height:10px;font-size:4.3px;color:#666;line-height:10px;text-align:center;transform:rotate(-90deg)">2</div>
<div class="a" style="left:207.3px;top:348.6px;width:7px;height:10px;font-size:4.3px;color:#666;line-height:10px;text-align:center;transform:rotate(-90deg)">3</div>
<div class="a" style="left:207.3px;top:362.6px;width:7px;height:10px;font-size:4.3px;color:#666;line-height:10px;text-align:center;transform:rotate(-90deg)">4</div>
<div class="a" style="left:207.3px;top:376.6px;width:7px;height:10px;font-size:4.3px;color:#666;line-height:10px;text-align:center;transform:rotate(-90deg)">5</div>
<div class="a" style="left:207.3px;top:390.6px;width:7px;height:10px;font-size:4.3px;color:#666;line-height:10px;text-align:center;transform:rotate(-90deg)">6</div>
<div class="a" style="left:207.3px;top:404.6px;width:7px;height:10px;font-size:4.3px;color:#666;line-height:10px;text-align:center;transform:rotate(-90deg)">7</div>
<div class="a" style="left:207.3px;top:418.6px;width:7px;height:10px;font-size:4.3px;color:#666;line-height:10px;text-align:center;transform:rotate(-90deg)">8</div>
<div class="a" style="left:207.3px;top:432.6px;width:7px;height:10px;font-size:4.3px;color:#666;line-height:10px;text-align:center;transform:rotate(-90deg)">9</div>
<svg class="a" style="left:0;top:0" width="1000" height="500" viewBox="0 0 1000 500"><path d="M300.50 164.30 V165.8 M304.00 164.30 V165.8 M307.50 162.20 V165.8 M311.00 164.30 V165.8 M314.50 164.30 V165.8 M318.00 164.30 V165.8 M321.50 162.20 V165.8 M325.00 164.30 V165.8 M328.50 164.30 V165.8 M332.00 164.30 V165.8 M335.50 162.20 V165.8 M339.00 164.30 V165.8 M342.50 164.30 V165.8 M346.00 164.30 V165.8 M349.50 162.20 V165.8 M353.00 164.30 V165.8 M356.50 164.30 V165.8 M360.00 164.30 V165.8 M363.50 162.20 V165.8 M367.00 164.30 V165.8 M370.50 164.30 V165.8 M374.00 164.30 V165.8 M377.50 162.20 V165.8 M381.00 164.30 V165.8 M384.50 164.30 V165.8 M388.00 164.30 V165.8 M391.50 162.20 V165.8 M395.00 164.30 V165.8 M398.50 164.30 V165.8 M402.00 164.30 V165.8 M405.50 162.20 V165.8 M409.00 164.30 V165.8 M412.50 164.30 V165.8 M416.00 164.30 V165.8 M419.50 162.20 V165.8 M423.00 164.30 V165.8 M426.50 164.30 V165.8 M430.00 164.30 V165.8 M433.50 162.20 V165.8 M437.00 164.30 V165.8 M440.50 164.30 V165.8 M444.00 164.30 V165.8 M447.50 162.20 V165.8 M451.00 164.30 V165.8 M454.50 164.30 V165.8 M458.00 164.30 V165.8 M461.50 162.20 V165.8 M465.00 164.30 V165.8 M468.50 164.30 V165.8 M472.00 164.30 V165.8 M475.50 162.20 V165.8 M479.00 164.30 V165.8 M482.50 164.30 V165.8 M486.00 164.30 V165.8 M489.50 162.20 V165.8 M493.00 164.30 V165.8 M496.50 164.30 V165.8 M500.00 164.30 V165.8 M503.50 162.20 V165.8 M507.00 164.30 V165.8 M510.50 164.30 V165.8 M514.00 164.30 V165.8 M517.50 162.20 V165.8 M521.00 164.30 V165.8 M524.50 164.30 V165.8 M528.00 164.30 V165.8 M531.50 162.20 V165.8 M535.00 164.30 V165.8 M538.50 164.30 V165.8 M542.00 164.30 V165.8 M545.50 162.20 V165.8 M549.00 164.30 V165.8 M552.50 164.30 V165.8 M556.00 164.30 V165.8 M559.50 162.20 V165.8 M563.00 164.30 V165.8 M566.50 164.30 V165.8 M570.00 164.30 V165.8 M573.50 162.20 V165.8 M577.00 164.30 V165.8 M580.50 164.30 V165.8 M584.00 164.30 V165.8 M587.50 162.20 V165.8 M591.00 164.30 V165.8 M594.50 164.30 V165.8 M598.00 164.30 V165.8 M601.50 162.20 V165.8 M605.00 164.30 V165.8 M608.50 164.30 V165.8 M612.00 164.30 V165.8 M615.50 162.20 V165.8 M619.00 164.30 V165.8 M622.50 164.30 V165.8 M626.00 164.30 V165.8 M629.50 162.20 V165.8 M633.00 164.30 V165.8 M636.50 164.30 V165.8 M640.00 164.30 V165.8 M643.50 162.20 V165.8 M647.00 164.30 V165.8 M650.50 164.30 V165.8 M654.00 164.30 V165.8 M657.50 162.20 V165.8 M661.00 164.30 V165.8 M664.50 164.30 V165.8 M668.00 164.30 V165.8 M671.50 162.20 V165.8 M675.00 164.30 V165.8 M678.50 164.30 V165.8 M682.00 164.30 V165.8 M685.50 162.20 V165.8 M689.00 164.30 V165.8 M692.50 164.30 V165.8 M696.00 164.30 V165.8 M699.50 162.20 V165.8 M703.00 164.30 V165.8 M706.50 164.30 V165.8 M710.00 164.30 V165.8 M713.50 162.20 V165.8 M717.00 164.30 V165.8 M720.50 164.30 V165.8 M724.00 164.30 V165.8 M727.50 162.20 V165.8 M731.00 164.30 V165.8 M734.50 164.30 V165.8 M738.00 164.30 V165.8 M741.50 162.20 V165.8 M745.00 164.30 V165.8 M748.50 164.30 V165.8 M752.00 164.30 V165.8 M755.50 162.20 V165.8 M759.00 164.30 V165.8 M213.10 182.10 H214.6 M213.10 185.60 H214.6 M213.10 189.10 H214.6 M211.00 192.60 H214.6 M213.10 196.10 H214.6 M213.10 199.60 H214.6 M213.10 203.10 H214.6 M211.00 206.60 H214.6 M213.10 210.10 H214.6 M213.10 213.60 H214.6 M213.10 217.10 H214.6 M211.00 220.60 H214.6 M213.10 224.10 H214.6 M213.10 227.60 H214.6 M213.10 231.10 H214.6 M211.00 234.60 H214.6 M213.10 238.10 H214.6 M213.10 241.60 H214.6 M213.10 245.10 H214.6 M211.00 248.60 H214.6 M213.10 252.10 H214.6 M213.10 255.60 H214.6 M213.10 259.10 H214.6 M211.00 262.60 H214.6 M213.10 266.10 H214.6 M213.10 269.60 H214.6 M213.10 273.10 H214.6 M211.00 276.60 H214.6 M213.10 280.10 H214.6 M213.10 283.60 H214.6 M213.10 287.10 H214.6 M211.00 290.60 H214.6 M213.10 294.10 H214.6 M213.10 297.60 H214.6 M213.10 301.10 H214.6 M211.00 304.60 H214.6 M213.10 308.10 H214.6 M213.10 311.60 H214.6 M213.10 315.10 H214.6 M211.00 318.60 H214.6 M213.10 322.10 H214.6 M213.10 325.60 H214.6 M213.10 329.10 H214.6 M211.00 332.60 H214.6 M213.10 336.10 H214.6 M213.10 339.60 H214.6 M213.10 343.10 H214.6 M211.00 346.60 H214.6 M213.10 350.10 H214.6 M213.10 353.60 H214.6 M213.10 357.10 H214.6 M211.00 360.60 H214.6 M213.10 364.10 H214.6 M213.10 367.60 H214.6 M213.10 371.10 H214.6 M211.00 374.60 H214.6 M213.10 378.10 H214.6 M213.10 381.60 H214.6 M213.10 385.10 H214.6 M211.00 388.60 H214.6 M213.10 392.10 H214.6 M213.10 395.60 H214.6 M213.10 399.10 H214.6 M211.00 402.60 H214.6 M213.10 406.10 H214.6 M213.10 409.60 H214.6 M213.10 413.10 H214.6 M211.00 416.60 H214.6 M213.10 420.10 H214.6 M213.10 423.60 H214.6 M213.10 427.10 H214.6 M211.00 430.60 H214.6 M213.10 434.10 H214.6 M213.10 437.60 H214.6 M213.10 441.10 H214.6 M211.00 444.60 H214.6" stroke="#a8a8a8" stroke-width="0.5"/><path d="M287.3 160.5 V166 M761.7 160.5 V166" stroke="#8a8a8a" stroke-width="0.5"/></svg>

<!-- slide -->
<div class="a" style="left:286.2px;top:178px;width:477px;height:269.5px;background:#e2e1e2;box-shadow:0 0 2px 1px rgba(0,0,0,0.06)"></div>
<div class="a" style="left:287.2px;top:178.6px;width:474.7px;height:267.8px;background:#fff"></div>
<svg class="a" style="left:287px;top:178px" width="476" height="270" viewBox="287 178 476 270">
  <path d="M328.5 272.5 H432 V227.7 L485 318 L432 408.7 V363.8 H328.5Z" fill="#f8bd3f"/>
  <path d="M723 272.5 H616 V227.7 L563 318 L616 408.7 V363.8 H723Z" fill="#5b9bd5"/>
  <defs><linearGradient id="gg" x1="0" y1="0" x2="0" y2="1"><stop offset="0" stop-color="#b3d89a"/><stop offset="1" stop-color="#9bc97f"/></linearGradient></defs>
  <rect x="459.5" y="297.3" width="135.8" height="42.2" fill="url(#gg)" stroke="#82b866" stroke-width="0.8"/>
  
  <path d="M341.5 326.3 Q342.5 325.6 343.5 326.3 T345.5 326.3 T347.5 326.3 T349.5 326.3 T351.5 326.3 T353.5 326.3 T355.5 326.3 T357.5 326.3 T359.5 326.3 T361.5 326.3 T363.5 326.3 T365.5 326.3 T367.5 326.3 T369.5 326.3 T371.5 326.3 T373.5 326.3 T375.5 326.3 T377.5 326.3 T379.5 326.3 T381.5 326.3 T383.5 326.3 T385.5 326.3 T387.5 326.3 T389.5 326.3 T391.5 326.3 T393.5 326.3 T395.5 326.3 T397.5 326.3 T399.5 326.3 T401.5 326.3 T403.5 326.3 T405.5 326.3 T407.5 326.3 T409.5 326.3 T411.5 326.3 T413.5 326.3 T415.5 326.3 T417.5 326.3 T419.5 326.3 T421.5 326.3 T423.5 326.3 T425.5 326.3 T427.5 326.3 T429.5 326.3 T431.5 326.3 T433.5 326.3 T435.5 326.3 T437.5 326.3 T439.5 326.3 T441.5 326.3 T443.5 326.3 T445.5 326.3" fill="none" stroke="#e0533a" stroke-width="0.6"/>
  <path d="M604.5 326.3 Q605.5 325.6 606.5 326.3 T608.5 326.3 T610.5 326.3 T612.5 326.3 T614.5 326.3 T616.5 326.3 T618.5 326.3 T620.5 326.3 T622.5 326.3 T624.5 326.3 T626.5 326.3 T628.5 326.3 T630.5 326.3 T632.5 326.3 T634.5 326.3 T636.5 326.3 T638.5 326.3 T640.5 326.3 T642.5 326.3 T644.5 326.3 T646.5 326.3 T648.5 326.3 T650.5 326.3 T652.5 326.3 T654.5 326.3 T656.5 326.3 T658.5 326.3 T660.5 326.3 T662.5 326.3 T664.5 326.3 T666.5 326.3 T668.5 326.3 T670.5 326.3 T672.5 326.3 T674.5 326.3 T676.5 326.3 T678.5 326.3 T680.5 326.3 T682.5 326.3 T684.5 326.3 T686.5 326.3 T688.5 326.3 T690.5 326.3 T692.5 326.3 T694.5 326.3 T696.5 326.3 T698.5 326.3 T700.5 326.3 T702.5 326.3 T704.5 326.3 T706.5 326.3" fill="none" stroke="#c8406a" stroke-width="0.6"/>
</svg>
<div class="t" style="left:341.5px;top:308.9px;font-size:19.5px;color:#fff;-webkit-text-stroke:0.3px #fff;transform:scaleX(1.09);transform-origin:0 0">психологія</div>
<div class="t" style="left:604.3px;top:308.9px;font-size:19.5px;color:#fff;-webkit-text-stroke:0.3px #fff;transform:scaleX(1.14);transform-origin:0 0">економіка</div>
<div class="t" style="left:479.5px;top:303.2px;font-size:14px;font-weight:bold;color:#111;letter-spacing:-0.2px">ЕКОНОМІЧНА</div>
<div class="t" style="left:484px;top:322.2px;font-size:14px;font-weight:bold;color:#111;letter-spacing:-0.6px">ПСИХОЛОГІЯ</div>

<svg class="a" style="left:216px;top:167px" width="614" height="290" viewBox="216 167 614 290"><path d="M216 311.6 H830" stroke="#9a9a9a" stroke-width="0.5" stroke-dasharray="1.5 1.2" opacity=".75"/><path d="M524.4 167 V456" stroke="#9a9a9a" stroke-width="0.5" stroke-dasharray="1.5 1.2" opacity=".75"/></svg>
<!-- notes -->
<div class="a" style="left:208.5px;top:456.3px;width:621.5px;height:19px;background:#fefefe;border-top:0.7px solid #dcdcdc"></div>
<div class="t" style="left:212px;top:461.6px;font-size:6.6px;color:#1a1a1a;-webkit-text-stroke:0.2px #1a1a1a;transform:scaleX(0.905);transform-origin:0 0">Щелкните, чтобы добавить заметки</div>
<!-- status bar -->
<div class="a" style="left:167px;top:475.3px;width:663px;height:10.7px;background:#e7e6e6;border-top:0.6px solid #d6d5d5;border-radius:0 0 2px 2px"></div>
<div class="t" style="left:178.4px;top:478px;font-size:6px;color:#7e7e7e">Слайд 4 из 35</div>
<div class="t" style="left:226.4px;top:478px;font-size:6.1px;color:#7e7e7e">украинский</div>


<!-- status bar right -->
<svg class="a" style="left:570px;top:474px" width="260" height="13" viewBox="570 474 260 13">
  <path d="M582 477 V479 M580 479.2 H584 L585 481.5 H579Z" fill="#8a8a8a" stroke="#8a8a8a" stroke-width="0.4"/><path d="M579.5 482.4 H584.5" stroke="#8a8a8a" stroke-width="0.6"/>
  <path d="M620 477.6 H626 V481 H622 L620.5 482.5 V481 H620Z" fill="#6a6a6a"/>
  <rect x="667" y="475.5" width="16" height="10.5" fill="#c9c8c8"/>
  <rect x="671.5" y="477.5" width="7" height="6.4" fill="#fafafa" stroke="#777" stroke-width="0.5"/><path d="M674 477.5 V483.9" stroke="#777" stroke-width="0.5"/>
  <g fill="#666"><rect x="688" y="477.8" width="3" height="2.2"/><rect x="692.2" y="477.8" width="3" height="2.2"/><rect x="688" y="481" width="3" height="2.2"/><rect x="692.2" y="481" width="3" height="2.2"/></g>
  <rect x="704.3" y="477.8" width="6.5" height="4.2" fill="none" stroke="#777" stroke-width="0.5"/><path d="M707.5 482 V483.6 M706 483.6 H709" stroke="#777" stroke-width="0.5"/>
  <path d="M720 480.6 H723" stroke="#777" stroke-width="0.7"/>
  <path d="M727.2 480.6 H772" stroke="#9d9d9d" stroke-width="0.9"/>
  <circle cx="750.4" cy="480.6" r="2.3" fill="#fff" stroke="#bbb" stroke-width="0.4"/>
  <path d="M776 480.6 H780 M778 478.6 V482.6" stroke="#777" stroke-width="0.7"/>
  <rect x="811.2" y="477.4" width="6.2" height="6.2" fill="none" stroke="#888" stroke-width="0.5"/><path d="M811.2 477.4 L817.4 483.6 M817.4 477.4 L811.2 483.6" stroke="#999" stroke-width="0.4"/>
</svg>
<div class="t" style="left:586px;top:477.5px;font-size:6.1px;color:#5e5e5e">Заметки</div>
<div class="t" style="left:628px;top:477.5px;font-size:5.8px;color:#5e5e5e">Примечания</div>
<div class="t" style="left:788px;top:477.7px;font-size:5.7px;color:#7a7a7a;letter-spacing:-0.2px">107%</div>
<!-- dock -->
<div class="a" style="left:180.7px;top:487px;width:638.5px;height:14px;background:#4f5570;border-radius:2.5px 2.5px 0 0;border-top:0.5px solid #6a708a"></div>
<svg class="a" style="left:167px;top:486px" width="663" height="14" viewBox="167 486 663 14">
  <rect x="184" y="490.7" width="13.2" height="11" rx="1.5" fill="#3d9bf0"/><path d="M190.6 490.7 H195.7 Q197.2 490.7 197.2 492.2 V501.7 H190.6 Q192 496 190.6 490.7Z" fill="#eef4fb"/>
  <circle cx="208" cy="496.5" r="7" fill="#7a3fa8"/><circle cx="208" cy="496.5" r="5.8" fill="#3a57c4"/><circle cx="208" cy="497.5" r="3" fill="#d04fbf" opacity=".7"/>
  <circle cx="226" cy="496.5" r="7" fill="#a4a8b3"/><circle cx="226" cy="496.5" r="5.8" fill="#8d919c"/><path d="M223 500 L228 493 L229.5 494 L224.5 501Z" fill="#2b2d33"/>
  <circle cx="244" cy="496.5" r="7" fill="#e9eef5"/><circle cx="244" cy="496.5" r="6" fill="#2a8ff0"/><path d="M241 499.5 L247.3 493.3 L245 498Z" fill="#e33b2e"/><path d="M241 499.5 L243 495 L247.3 493.3Z" fill="#fff"/>
  <rect x="255.5" y="490" width="12.6" height="11" fill="#5c8fd6" stroke="#dfe8f3" stroke-width="0.8"/><path d="M259 501 Q260 494 262 495 Q264 496 265 501Z" fill="#6e5a3a"/>
  <rect x="273" y="490" width="12" height="11" rx="0.8" fill="#9c7744"/><rect x="283.8" y="491" width="1.2" height="9" fill="#6aa14f"/>
  <rect x="291" y="489.5" width="12.2" height="11" rx="1" fill="#fafafa"/><rect x="291" y="489.5" width="12.2" height="3" fill="#e2473a"/><text x="293" y="500" font-size="6.5" font-family="Liberation Sans" fill="#222">13</text>
  <circle cx="302.2" cy="489.8" r="2.5" fill="#e5393a"/>
  <rect x="308" y="489.5" width="12" height="11" rx="0.8" fill="#fdfbe8"/><rect x="308" y="489.5" width="12" height="2.2" fill="#f3d34a"/>
  <rect x="326" y="489.5" width="12" height="11" rx="0.8" fill="#f7f7f7"/><circle cx="328.5" cy="493" r="0.8" fill="#e34c3a"/><circle cx="328.5" cy="495.5" r="0.8" fill="#f5a623"/><circle cx="328.5" cy="498" r="0.8" fill="#4aa84f"/>
  <path d="M659 489.6 L663 500 H655Z" fill="#f28a1e"/><path d="M657.4 494 H660.6 M656.6 496.8 H661.4" stroke="#fff" stroke-width="0.7"/>
  <rect x="669" y="492" width="16" height="7" rx="1" fill="#dcdcdc"/><rect x="671.5" y="489.5" width="11" height="3" fill="#f3f3f3"/><rect x="671" y="496" width="12" height="4" fill="#9c9c9c"/>
  <circle cx="684" cy="490.3" r="2.4" fill="#e5393a"/>
  <rect x="688" y="489" width="13.6" height="12" rx="2" fill="#2f6fe8"/><text x="689.6" y="496.6" font-size="3.4" font-family="Liberation Sans" fill="#fff">zoom</text>
  <path d="M707.2 488 V500" stroke="#6f758c" stroke-width="0.5"/>
  <path d="M717.8 492.5 Q718 489.4 720.8 489.4 Q723.6 489.4 723.6 492 Q723.6 494 721 495.6 V498" fill="none" stroke="#c7cad5" stroke-width="1"/>
  <g fill="#eef0f4"><rect x="730" y="491.5" width="16" height="9"/><rect x="748" y="491.5" width="15.5" height="9"/><rect x="766" y="491.5" width="15.5" height="9"/><rect x="783.5" y="491.5" width="15.5" height="9"/></g>
  <g fill="#c9ccd4"><rect x="732" y="493.5" width="8" height="0.6"/><rect x="750" y="493.5" width="10" height="0.6"/><rect x="768" y="493.5" width="10" height="0.6"/></g>
  <path d="M803.5 490 H814.5 L813.2 501 H804.8Z" fill="#d6d9de"/><ellipse cx="809" cy="490.3" rx="5.6" ry="1.4" fill="#eceef1"/>
</svg>
<!-- share banner -->
<div class="a" style="left:346px;top:486.2px;width:308px;height:14px;background:#f5f4f4"></div>
<div class="a" style="left:350.5px;top:492px;width:3.5px;height:5px;background:#dcdcdc"></div>
<div class="t" style="left:358px;top:492.4px;font-size:6px;color:#333;letter-spacing:-0.01px">Приложению teams.microsoft.com предоставлен доступ к вашему экрану.</div>
<div class="a" style="left:566px;top:488.5px;width:58px;height:11.5px;background:#e6e5e5;border-radius:1px"></div>
<div class="t" style="left:573px;top:492.4px;font-size:6.1px;color:#444">Закрыть доступ</div>
<div class="t" style="left:629px;top:492.4px;font-size:5.9px;color:#2f6ad0;text-decoration:underline">Скрыть</div>
<!-- bottom-left overlay -->
<div class="a" style="left:7.2px;top:491.4px;width:46.2px;height:9px;background:#121114;border-radius:1.5px"></div>
<div class="t" style="left:10px;top:494.6px;font-size:6.4px;color:#f4f4f4;letter-spacing:-0.2px">Оксана (гость)</div>
<div class="a" style="left:58px;top:491.4px;width:34px;height:9px;background:#121114;border-radius:1.5px"></div>
<svg class="a" style="left:58px;top:491px" width="34" height="9" viewBox="58 491 34 9"><path d="M63.5 497.4 H69 M80.4 497.4 H86.4 M83.4 494.4 V500" stroke="#e0e0e0" stroke-width="0.7"/></svg>

</body></html>
